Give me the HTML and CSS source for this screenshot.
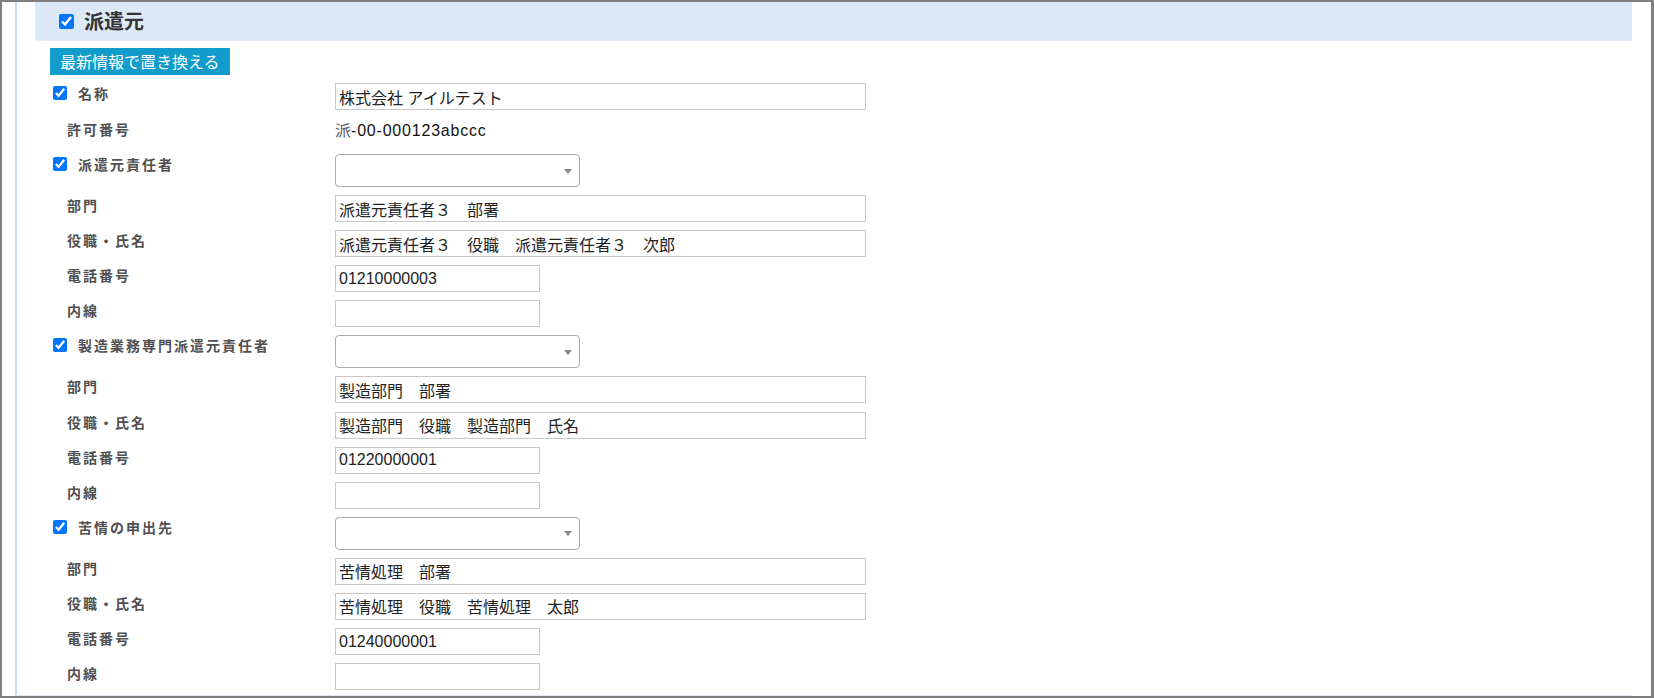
FILE: index.html
```html
<!DOCTYPE html>
<html lang="ja">
<head>
<meta charset="utf-8">
<title>派遣元</title>
<link rel="stylesheet" href="styles.css">
</head>
<body>
<div class="frame">
  <div class="panel">
    <div class="section-head">
      <input type="checkbox" class="cb cb-head" checked>
      <span class="section-title">派遣元</span>
    </div>
    <div class="form">
      <button class="btn-refresh" type="button">最新情報で置き換える</button>

      <div class="row row-input">
        <label class="lbl lbl-cb"><input type="checkbox" class="cb" checked><span>名称</span></label>
        <input class="inp inp-wide" type="text" value="株式会社 アイルテスト">
      </div>
      <div class="row row-static">
        <span class="lbl lbl-plain">許可番号</span>
        <span class="static-val"><span class="kanji">派</span>-00-000123abccc</span>
      </div>

      <div class="row row-select">
        <label class="lbl lbl-cb"><input type="checkbox" class="cb" checked><span>派遣元責任者</span></label>
        <div class="sel"><span class="caret"></span></div>
      </div>
      <div class="row row-input">
        <span class="lbl lbl-plain">部門</span>
        <input class="inp inp-wide" type="text" value="派遣元責任者３　部署">
      </div>
      <div class="row row-input">
        <span class="lbl lbl-plain">役職・氏名</span>
        <input class="inp inp-wide" type="text" value="派遣元責任者３　役職　派遣元責任者３　次郎">
      </div>
      <div class="row row-input">
        <span class="lbl lbl-plain">電話番号</span>
        <input class="inp inp-short" type="text" value="01210000003">
      </div>
      <div class="row row-input">
        <span class="lbl lbl-plain">内線</span>
        <input class="inp inp-short" type="text" value="">
      </div>

      <div class="row row-select">
        <label class="lbl lbl-cb"><input type="checkbox" class="cb" checked><span>製造業務専門派遣元責任者</span></label>
        <div class="sel"><span class="caret"></span></div>
      </div>
      <div class="row row-input">
        <span class="lbl lbl-plain">部門</span>
        <input class="inp inp-wide" type="text" value="製造部門　部署">
      </div>
      <div class="row row-input">
        <span class="lbl lbl-plain">役職・氏名</span>
        <input class="inp inp-wide" type="text" value="製造部門　役職　製造部門　氏名">
      </div>
      <div class="row row-input">
        <span class="lbl lbl-plain">電話番号</span>
        <input class="inp inp-short" type="text" value="01220000001">
      </div>
      <div class="row row-input">
        <span class="lbl lbl-plain">内線</span>
        <input class="inp inp-short" type="text" value="">
      </div>

      <div class="row row-select">
        <label class="lbl lbl-cb"><input type="checkbox" class="cb" checked><span>苦情の申出先</span></label>
        <div class="sel"><span class="caret"></span></div>
      </div>
      <div class="row row-input">
        <span class="lbl lbl-plain">部門</span>
        <input class="inp inp-wide" type="text" value="苦情処理　部署">
      </div>
      <div class="row row-input">
        <span class="lbl lbl-plain">役職・氏名</span>
        <input class="inp inp-wide" type="text" value="苦情処理　役職　苦情処理　太郎">
      </div>
      <div class="row row-input">
        <span class="lbl lbl-plain">電話番号</span>
        <input class="inp inp-short" type="text" value="01240000001">
      </div>
      <div class="row row-input">
        <span class="lbl lbl-plain">内線</span>
        <input class="inp inp-short" type="text" value="">
      </div>
    </div>
  </div>
</div>
</body>
</html>
```

FILE: styles.css
```css
html, body {
  margin: 0;
  padding: 0;
  background: #ffffff;
}

body {
  font-family: "Noto Sans CJK JP", "Liberation Sans", sans-serif;
  color: #333333;
}

.frame {
  width: 1654px;
  height: 698px;
  box-sizing: border-box;
  border: 2px solid #7f7f7f;
  border-right-width: 3px;
  background: #ffffff;
  overflow: hidden;
}

.panel {
  margin-left: 13px;
  width: 1617px;
  height: 100%;
  box-sizing: border-box;
  border-left: 2px solid #c8dcf2;
  border-bottom: 1px solid #dfe7f0;
  padding-left: 18px;
  overflow: hidden;
}

.section-head {
  height: 39px;
  box-sizing: border-box;
  background: #dce9f7;
  border-bottom: 1px solid #e6eff9;
  display: flex;
  align-items: center;
  padding-left: 24px;
}

.cb {
  width: 14px;
  height: 14px;
  margin: 0;
  accent-color: #0075ff;
  flex: none;
}

.cb-head {
  width: 15px;
  height: 15px;
  margin-top: 1px;
}

.section-title {
  margin-left: 10px;
  font-size: 20px;
  font-weight: 700;
  color: #333333;
  line-height: 24px;
}

.form {
  padding-left: 15px;
  display: flex;
  flex-direction: column;
  align-items: flex-start;
}

.btn-refresh {
  margin: 7px 0 4px 0;
  height: 27px;
  padding: 0 10px;
  border: none;
  border-radius: 0;
  background: #119ccc;
  color: #ffffff;
  font-family: "Noto Sans CJK JP", sans-serif;
  font-size: 16px;
  line-height: 27px;
  cursor: pointer;
  flex: none;
}

.row {
  display: flex;
  align-items: flex-start;
  box-sizing: border-box;
  padding-top: 4px;
  align-self: stretch;
  flex: none;
}

.row-input {
  height: 35.1px;
}

.row-select {
  height: 41px;
}

.row-static {
  height: 36px;
  padding-top: 5px;
}

.lbl {
  width: 285px;
  flex: none;
  box-sizing: border-box;
  font-size: 14px;
  font-weight: 700;
  color: #505050;
  letter-spacing: 2px;
  line-height: 20px;
}

.lbl-cb {
  display: flex;
  align-items: flex-start;
  padding-left: 3px;
}

.lbl-cb .cb {
  margin-top: 3px;
  margin-right: 11px;
}

.lbl-plain {
  padding-left: 17px;
}

.inp {
  height: 27px;
  box-sizing: border-box;
  border: 1px solid #c8c8c8;
  border-radius: 0;
  padding: 0 3px;
  margin: 0;
  font-family: "Liberation Sans", "Noto Sans CJK JP", sans-serif;
  font-size: 16px;
  color: #222222;
  background: #ffffff;
  outline: none;
}

.inp-wide {
  width: 531px;
}

.inp-short {
  width: 205px;
}

.static-val {
  font-family: "Liberation Sans", "Noto Sans CJK JP", sans-serif;
  font-size: 16px;
  line-height: 24px;
  letter-spacing: 0.8px;
  color: #111111;
}

.static-val .kanji {
  color: #5a6070;
  letter-spacing: 0;
}

.sel {
  width: 245px;
  height: 33px;
  box-sizing: border-box;
  border: 1px solid #a9a9a9;
  border-radius: 4px;
  background: #ffffff;
  display: flex;
  align-items: center;
  justify-content: flex-end;
  padding-right: 7px;
}

.caret {
  width: 0;
  height: 0;
  border-left: 4px solid transparent;
  border-right: 4px solid transparent;
  border-top: 5px solid #888888;
  margin-top: 1px;
}
```
